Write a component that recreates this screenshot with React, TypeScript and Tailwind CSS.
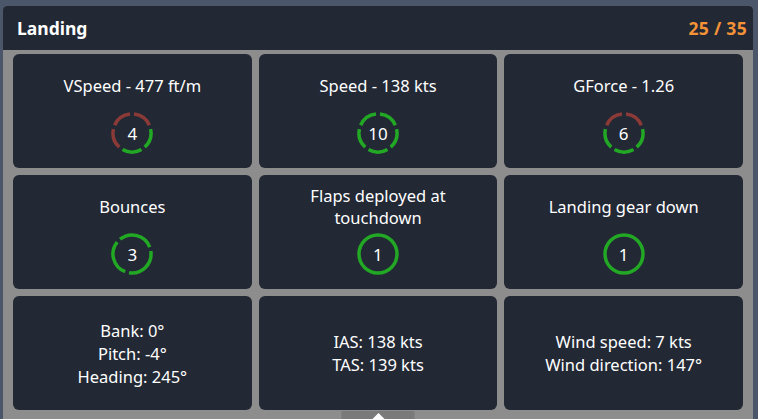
import React from 'react';

type Stat = {
  title: string;
  value: number;
  segments: number;
  filled: number;
};

const GREEN = '#22a824';
const RED = '#8b3a37';

const point = (cx: number, cy: number, r: number, deg: number) => {
  const a = (deg * Math.PI) / 180;
  return `${(cx + r * Math.cos(a)).toFixed(2)} ${(cy + r * Math.sin(a)).toFixed(2)}`;
};

const arc = (from: number, to: number, r = 19, c = 22) => {
  const large = to - from > 180 ? 1 : 0;
  return `M ${point(c, c, r, from)} A ${r} ${r} 0 ${large} 1 ${point(c, c, r, to)}`;
};

const Ring: React.FC<{ value: number; segments: number; filled: number }> = ({ value, segments, filled }) => {
  const step = 360 / segments;
  const gap = 12;
  const start = segments === 5 ? -18 : -15;

  return (
    <div className="relative w-[44px] h-[44px] flex items-center justify-center">
      <svg width="44" height="44" viewBox="0 0 44 44" className="absolute inset-0">
        {segments === 1 ? (
          <circle cx="22" cy="22" r="19" fill="none" stroke={GREEN} strokeWidth="3.5" />
        ) : (
          [...Array(segments)].map((_, i) => (
            <path
              key={i}
              d={arc(start + i * step + gap / 2, start + (i + 1) * step - gap / 2)}
              fill="none"
              stroke={i < filled ? GREEN : RED}
              strokeWidth="3.5"
            />
          ))
        )}
      </svg>
      <span className="relative text-[17px] text-white leading-none">{value}</span>
    </div>
  );
};

const stats: Stat[] = [
  { title: 'VSpeed - 477 ft/m', value: 4, segments: 5, filled: 2 },
  { title: 'Speed - 138 kts', value: 10, segments: 5, filled: 5 },
  { title: 'GForce - 1.26', value: 6, segments: 5, filled: 3 },
  { title: 'Bounces', value: 3, segments: 3, filled: 3 },
  { title: 'Flaps deployed at touchdown', value: 1, segments: 1, filled: 1 },
  { title: 'Landing gear down', value: 1, segments: 1, filled: 1 },
];

const info: string[][] = [
  ['Bank: 0°', 'Pitch: -4°', 'Heading: 245°'],
  ['IAS: 138 kts', 'TAS: 139 kts'],
  ['Wind speed: 7 kts', 'Wind direction: 147°'],
];

export default function App() {
  return (
    <div
      className="w-[758px] h-[419px] overflow-hidden bg-[#4b566a] pl-[3px] pr-[5px] pt-[6px]"
      style={{ fontFamily: '"Noto Sans", "Open Sans", sans-serif' }}
    >
      <div className="relative h-full flex flex-col rounded-t-[4px] overflow-hidden bg-[#8d8d8d]">
        {/* Header */}
        <div className="h-[44px] shrink-0 bg-[#222834] flex items-center justify-between pl-[14px] pr-[6px]">
          <span className="text-white font-bold text-[17.5px]">Landing</span>
          <span className="text-[#f39237] font-bold text-[17.5px] tracking-[0.3px]">25 / 35</span>
        </div>

        {/* Cards */}
        <div className="grid grid-cols-3 auto-rows-[114px] gap-[7px] px-[10px] pt-[4px]">
          {stats.map(s => (
            <div key={s.title} className="bg-[#222834] rounded-[6px] flex flex-col items-center pt-[13px] pb-[13px] px-5">
              <div className="flex-1 min-h-0 flex items-center justify-center text-center text-white text-[16.5px] leading-[22px]">
                {s.title}
              </div>
              <div className="mt-[6px] shrink-0">
                <Ring value={s.value} segments={s.segments} filled={s.filled} />
              </div>
            </div>
          ))}
          {info.map((lines, i) => (
            <div key={i} className="bg-[#222834] rounded-[6px] flex flex-col items-center justify-center text-white text-[16.5px] leading-[23px]">
              {lines.map(l => (
                <span key={l}>{l}</span>
              ))}
            </div>
          ))}
        </div>

        {/* Collapse tab */}
        <div className="absolute bottom-0 left-1/2 -translate-x-1/2 w-[73px] h-[8px] bg-[#7a7a7a] flex justify-center">
          <div className="mt-[2px] w-0 h-0 border-l-[6px] border-r-[6px] border-b-[6px] border-l-transparent border-r-transparent border-b-white" />
        </div>
      </div>
    </div>
  );
}
